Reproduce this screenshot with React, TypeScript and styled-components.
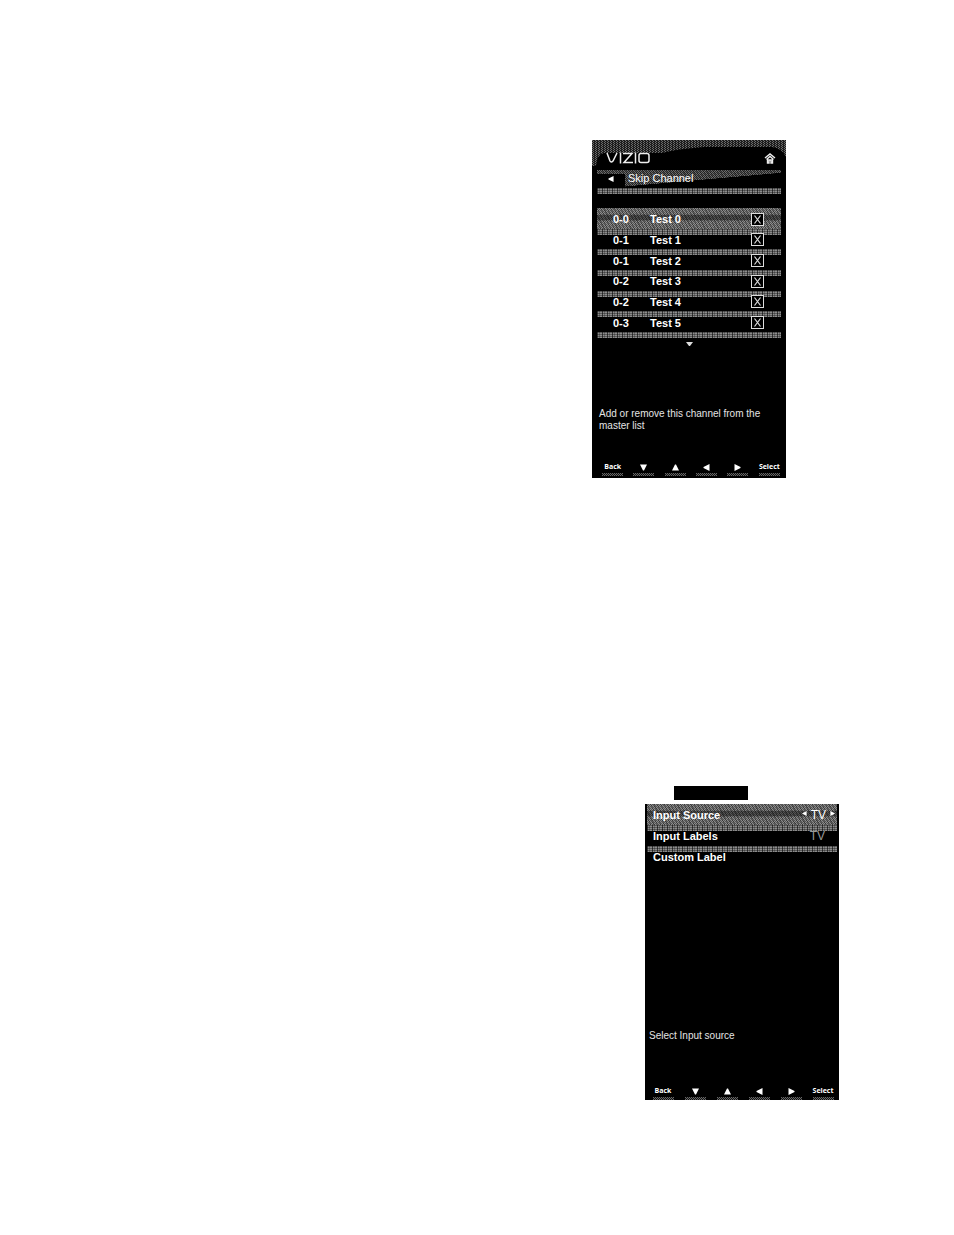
import React from "react";
import styled, { createGlobalStyle, css } from "styled-components";

const Global = createGlobalStyle`
  * { box-sizing: border-box; }
  body { margin: 0; background: #fff; }
  button, input { font: inherit; color: inherit; margin: 0; padding: 0; }
`;

const ribs = css`
  background:
    repeating-linear-gradient(90deg, rgba(0, 0, 0, 0.6) 0 1px, transparent 1px 2px, rgba(0, 0, 0, 0.25) 2px 3px, transparent 3px 5px),
    repeating-linear-gradient(0deg, #8c8c8c 0 1px, #5a5a5a 1px 2px);
`;

const grain = css`
  background:
    linear-gradient(180deg, transparent 30%, rgba(0, 0, 0, 0.4) 34% 55%, transparent 62%),
    repeating-linear-gradient(63deg, rgba(0, 0, 0, 0.35) 0 1px, transparent 1px 3px),
    repeating-conic-gradient(#555 0 25%, #8c8c8c 0 50%) 0 0 / 2px 2px;
`;

const Page = styled.main`
  display: flex;
  flex-direction: column;
  align-items: flex-end;
  padding: 140px 0 135px;
  font: 11px/12px "Liberation Sans", Arial, sans-serif;
  color: #fff;
`;

const Panel = styled.section<{ $minHeight: number; $right: number; $bottom?: number }>`
  display: flex;
  flex-direction: column;
  width: 194px;
  min-height: ${(p) => p.$minHeight}px;
  margin-right: ${(p) => p.$right}px;
  padding-bottom: ${(p) => p.$bottom ?? 0}px;
  background: #000;
`;

const Brand = styled.header`
  position: relative;
  display: flex;
  align-items: center;
  justify-content: space-between;
  height: 30px;
  padding: 6px 10px 0 14px;
`;

const Arc = styled.svg`
  position: absolute;
  inset: 0;
  width: 100%;
  height: 100%;
`;

const Logo = styled.svg`
  position: relative;
  width: 44px;
  height: 12px;
`;

const Home = styled.button`
  position: relative;
  width: 12px;
  height: 12px;
  border: 0;
  background: none;
  line-height: 0;
`;

const TitleRow = styled.div`
  display: flex;
  align-items: flex-start;
  height: 18px;
  margin: 0 5px;
  padding-top: 1px;
  background:
    linear-gradient(175deg, transparent 55%, #000 56%),
    repeating-linear-gradient(63deg, rgba(0, 0, 0, 0.35) 0 1px, transparent 1px 3px),
    repeating-conic-gradient(#2a2a2a 0 25%, #6c6c6c 0 50%) 0 0 / 2px 2px;
`;

const BackArrow = styled.button`
  display: flex;
  align-items: center;
  width: 28px;
  height: 14px;
  margin-top: 3px;
  padding: 0 0 4px 11px;
  border: 0;
  background: #000;
`;

const Title = styled.h1`
  margin: 0;
  padding: 0 3px;
  font-size: 11px;
  line-height: 14px;
  font-weight: 400;
`;

const Stripe = styled.div`
  height: 6px;
  margin: 0 5px;
  ${ribs}
`;

const Channels = styled.ul`
  display: grid;
  grid-template-rows: repeat(6, 1fr);
  height: 124px;
  margin: 14px 5px 0;
  padding: 0;
  list-style: none;
  font-weight: 700;
`;

const ChannelRow = styled.li<{ $active: boolean }>`
  ${(p) => p.$active ? grain : css`
    &::before {
      content: "";
      display: block;
      height: 6px;
      margin-bottom: -6px;
      ${ribs}
    }
  `}
`;

const ChannelLabel = styled.label`
  display: grid;
  grid-template-columns: 37px 1fr 30px;
  align-items: center;
  position: relative;
  height: 100%;
  padding: 2px 0 0 16px;
`;

const Tick = styled.span`
  position: relative;
  width: 13px;
  height: 13px;
  line-height: 0;
`;

const Box = styled.input`
  appearance: none;
  display: block;
  width: 13px;
  height: 13px;
  border: 1px solid #ddd;
  background: #000;
`;

const Cross = styled.svg`
  position: absolute;
  inset: 0;
  pointer-events: none;
  visibility: hidden;
  ${Box}:checked + & { visibility: visible; }
`;

const More = styled.button`
  align-self: center;
  display: flex;
  justify-content: center;
  width: 12px;
  margin-top: 3px;
  border: 0;
  background: none;
`;

const Help = styled.p<{ $left: number }>`
  margin: auto 20px 0 ${(p) => p.$left}px;
  font-size: 10px;
  line-height: 12px;
  color: #e4e4e4;
`;

const Keys = styled.nav<{ $top: number; $left: number; $right: number }>`
  display: grid;
  grid-template-columns: repeat(6, 1fr);
  margin-top: ${(p) => p.$top}px;
  padding: 0 ${(p) => p.$right}px 0 ${(p) => p.$left}px;
`;

const Key = styled.button`
  display: flex;
  flex-direction: column;
  align-items: center;
  border: 0;
  background: none;
  font: 700 7px/10px "Open Sans", sans-serif;
  &::after {
    content: "";
    width: 21px;
    height: 3px;
    margin-top: 1px;
    background: repeating-conic-gradient(#111 0 25%, #666 0 50%) 0 0 / 2px 2px;
  }
`;

const KeyFace = styled.span`
  display: flex;
  align-items: center;
  height: 10px;
`;

const Tab = styled.div`
  width: 74px;
  height: 14px;
  margin: 308px 206px 4px 0;
  background: #000;
`;

const Setting = styled.div<{ $tone: "active" | "plain" }>`
  display: flex;
  align-items: center;
  justify-content: space-between;
  height: 21px;
  margin: 0 2px;
  padding: 0 0 0 6px;
  font-weight: 700;
  ${(p) => p.$tone === "active" && grain}
`;

const Divider = styled.div`
  height: 6px;
  margin: 0 2px -6px;
  ${ribs}
`;

const Value = styled.output<{ $dim?: boolean }>`
  display: flex;
  align-items: center;
  gap: 4px;
  padding-right: ${(p) => (p.$dim ? 12 : 2)}px;
  font-size: 12px;
  font-weight: 400;
  color: ${(p) => (p.$dim ? "#999" : "#fff")};
`;

const Step = styled.button`
  display: flex;
  padding-bottom: 2px;
  border: 0;
  background: none;
`;

type Direction = "down" | "up" | "left" | "right";

const shapes: Record<Direction, string> = {
  down: "M0 0.5H7L4 6.5H3Z",
  up: "M3 0.5H4L7 6.5H0Z",
  left: "M6.5 0V7L0.5 4V3Z",
  right: "M0.5 0V7L6.5 4V3Z",
};

const Arrow = ({ to, size = 7 }: { to: Direction; size?: number }) => (
  <svg width={size} height={size} viewBox="0 0 7 7" fill="#fff" aria-hidden="true">
    <path d={shapes[to]} />
  </svg>
);

const KeyBar = ({ top, left, right }: { top: number; left: number; right: number }) => (
  <Keys $top={top} $left={left} $right={right} aria-label="Remote keys">
    <Key><KeyFace>Back</KeyFace></Key>
    {(["down", "up", "left", "right"] as Direction[]).map((d) => (
      <Key key={d} aria-label={d}><KeyFace><Arrow to={d} /></KeyFace></Key>
    ))}
    <Key><KeyFace>Select</KeyFace></Key>
  </Keys>
);

const channels = [
  ["0-0", "Test 0"],
  ["0-1", "Test 1"],
  ["0-1", "Test 2"],
  ["0-2", "Test 3"],
  ["0-2", "Test 4"],
  ["0-3", "Test 5"],
];

export default function App() {
  return (
    <>
      <Global />
      <Page>
        <Panel $minHeight={338} $right={168} $bottom={2}>
          <Brand>
            <Arc viewBox="0 0 194 30" preserveAspectRatio="none" aria-hidden="true">
              <defs>
                <pattern id="speckle" width="3" height="2" patternUnits="userSpaceOnUse">
                  <rect width="3" height="2" fill="#1c1c1c" />
                  <path d="M0 0h1v1H0zM1 1h1v1H1z" fill="#6c6c6c" />
                </pattern>
              </defs>
              <path d="M0 0H194V17Q190 8 180 7H112Q84 9 70 13H12Q5 14 4 26H0Z" fill="url(#speckle)" />
            </Arc>
            <Logo viewBox="0 0 44 12" fill="none" stroke="#eee" strokeWidth="1.5" role="img" aria-label="VIZIO">
              <path d="M1 1L4 9Q5 11 7 9L11 1M14.5 0.5V11.5M17 1.5H26L18 10.5H27M29.5 0.5V11.5M35 1.5H41Q43 1.5 43 3.5V8.5Q43 10.5 41 10.5H35Q33 10.5 33 8.5V3.5Q33 1.5 35 1.5Z" />
            </Logo>
            <Home aria-label="Home">
              <svg width="12" height="12" viewBox="0 0 12 12" fill="none" stroke="#eee" strokeWidth="1.4" aria-hidden="true">
                <path d="M1 6L6 2L11 6M2.5 7.5L6 4.5L9.5 7.5M3.5 7V11H5V8H7V11H8.5V7" />
              </svg>
            </Home>
          </Brand>
          <TitleRow>
            <BackArrow aria-label="Previous menu"><Arrow to="left" size={6} /></BackArrow>
            <Title>Skip Channel</Title>
          </TitleRow>
          <Stripe />
          <Channels>
            {channels.map(([number, name], i) => (
              <ChannelRow key={name} $active={i === 0}>
                <ChannelLabel>
                  <span>{number}</span>
                  <span>{name}</span>
                  <Tick>
                    <Box type="checkbox" defaultChecked />
                    <Cross width="13" height="13" viewBox="0 0 13 13" stroke="#ddd" strokeWidth="1.2" aria-hidden="true">
                      <path d="M3.5 2.5L9.5 10.5M9.5 2.5L3.5 10.5" />
                    </Cross>
                  </Tick>
                </ChannelLabel>
              </ChannelRow>
            ))}
          </Channels>
          <Stripe />
          <More aria-label="More channels">
            <svg width="7" height="5" viewBox="0 0 7 5" fill="#ddd" aria-hidden="true">
              <path d="M0 1H7L4 5H3Z" />
            </svg>
          </More>
          <Help $left={7}>Add or remove this channel from the master list</Help>
          <KeyBar top={30} left={5} right={1} />
        </Panel>

        <Tab />
        <Panel $minHeight={296} $right={115}>
          <Setting $tone="active">
            <span>Input Source</span>
            <Value>
              <Step aria-label="Previous source"><Arrow to="left" size={5} /></Step>
              TV
              <Step aria-label="Next source"><Arrow to="right" size={5} /></Step>
            </Value>
          </Setting>
          <Divider />
          <Setting $tone="plain">
            <span>Input Labels</span>
            <Value $dim>TV</Value>
          </Setting>
          <Divider />
          <Setting $tone="plain">
            <span>Custom Label</span>
          </Setting>
          <Help $left={4}>Select Input source</Help>
          <KeyBar top={44} left={2} right={0} />
        </Panel>
      </Page>
    </>
  );
}
